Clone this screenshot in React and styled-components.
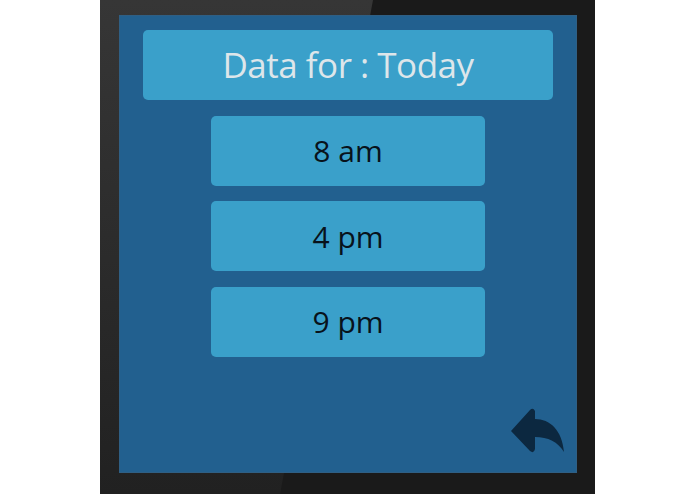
import styled, { createGlobalStyle } from "styled-components";

const GlobalStyle = createGlobalStyle`
  html, body {
    margin: 0;
    padding: 0;
    background: #ffffff;
    overflow: hidden;
  }
  body {
    font-family: "Open Sans", "Noto Sans", sans-serif;
  }
`;

const Page = styled.div`
  width: 695px;
  height: 494px;
  display: flex;
  justify-content: center;
  align-items: flex-start;
`;

const Frame = styled.div`
  position: relative;
  width: 495px;
  height: 494px;
  box-sizing: border-box;
  padding: 15px 18px 0 19px;
  background: #1a1a1a;

  &::before {
    content: "";
    position: absolute;
    inset: 0;
    background: linear-gradient(#363636, #212121);
    clip-path: polygon(0 0, 273px 0, 180px 100%, 0 100%);
  }
`;

const Screen = styled.div`
  position: relative;
  width: 458px;
  height: 458px;
  box-sizing: border-box;
  background: #22608f;
  border: 1px solid #2f5f84;
  padding: 14px 23px 0;
  display: flex;
  flex-direction: column;
  align-items: center;
  gap: 15.5px;
`;

const Header = styled.div`
  width: 100%;
  height: 70px;
  border-radius: 5px;
  background: #3aa0ca;
  color: #dde6ea;
  font-size: 35px;
  letter-spacing: -0.5px;
  padding-bottom: 2px;
  box-sizing: border-box;
  display: flex;
  align-items: center;
  justify-content: center;
`;

const TimeButton = styled.div`
  width: 274px;
  height: 70px;
  border-radius: 5px;
  background: #3aa0ca;
  color: #08121b;
  font-size: 30px;
  display: flex;
  align-items: center;
  justify-content: center;
`;

const BackButton = styled.div`
  position: absolute;
  right: 12px;
  bottom: 18px;
  width: 56px;
  height: 48px;
`;

const ReplyIcon = () => (
  <svg width="56" height="48" viewBox="0 0 56 48">
    <path
      d="M3 25 L22 4 Q25 1 27 5 L27 13 C42 13 54 24 56 46 C50 36 40 31 27 31 L27 43 Q26 48 22 45 Z"
      fill="#0c2840"
    />
  </svg>
);

const times = ["8 am", "4 pm", "9 pm"];

export default function App() {
  return (
    <>
      <GlobalStyle />
      <Page>
        <Frame>
          <Screen>
            <Header>Data for : Today</Header>
            {times.map((t) => (
              <TimeButton key={t}>{t}</TimeButton>
            ))}
            <BackButton>
              <ReplyIcon />
            </BackButton>
          </Screen>
        </Frame>
      </Page>
    </>
  );
}
